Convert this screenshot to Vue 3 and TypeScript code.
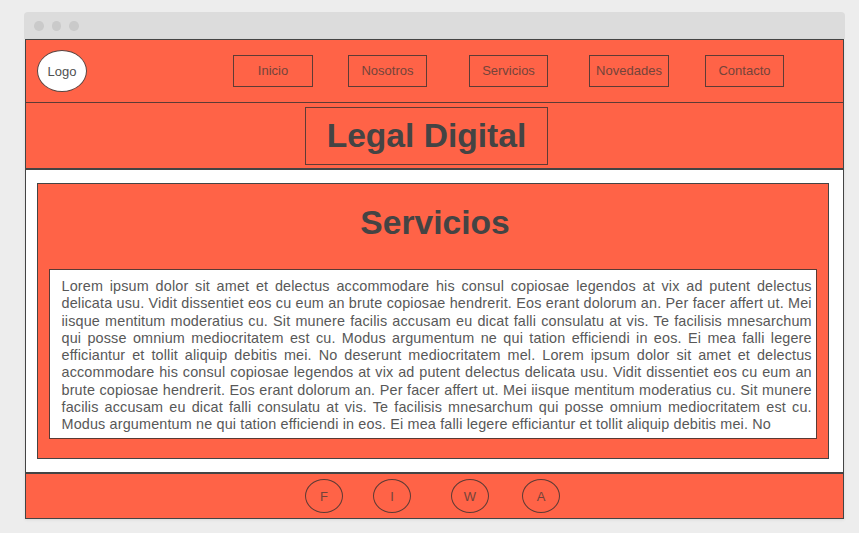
<script setup lang="ts">
interface NavItem {
  label: string
  width: number
  gap: number
}

interface SocialItem {
  label: string
  gap: number
}

const navItems: NavItem[] = [
  { label: 'Inicio', width: 80, gap: 0 },
  { label: 'Nosotros', width: 79, gap: 35 },
  { label: 'Servicios', width: 79, gap: 42 },
  { label: 'Novedades', width: 80, gap: 41 },
  { label: 'Contacto', width: 79, gap: 36 },
]

const lines: string[] = [
  'Lorem ipsum dolor sit amet et delectus accommodare his consul copiosae legendos at vix ad putent delectus',
  'delicata usu. Vidit dissentiet eos cu eum an brute copiosae hendrerit. Eos erant dolorum an. Per facer affert ut. Mei',
  'iisque mentitum moderatius cu. Sit munere facilis accusam eu dicat falli consulatu at vis. Te facilisis mnesarchum',
  'qui posse omnium mediocritatem est cu. Modus argumentum ne qui tation efficiendi in eos. Ei mea falli legere',
  'efficiantur et tollit aliquip debitis mei. No deserunt mediocritatem mel. Lorem ipsum dolor sit amet et delectus',
  'accommodare his consul copiosae legendos at vix ad putent delectus delicata usu. Vidit dissentiet eos cu eum an',
  'brute copiosae hendrerit. Eos erant dolorum an. Per facer affert ut. Mei iisque mentitum moderatius cu. Sit munere',
  'facilis accusam eu dicat falli consulatu at vis. Te facilisis mnesarchum qui posse omnium mediocritatem est cu.',
  'Modus argumentum ne qui tation efficiendi in eos. Ei mea falli legere efficiantur et tollit aliquip debitis mei. No',
]

const socials: SocialItem[] = [
  { label: 'F', gap: 0 },
  { label: 'I', gap: 30 },
  { label: 'W', gap: 40 },
  { label: 'A', gap: 33 },
]
</script>

<template>
  <div class="page">
    <div class="chrome">
      <span v-for="n in 3" :key="n" class="dot"></span>
    </div>
    <div class="window">
      <header class="topbar">
        <div class="logo">Logo</div>
        <nav class="nav">
          <a
            v-for="item in navItems"
            :key="item.label"
            class="nav-item"
            :style="{ width: item.width + 'px', marginLeft: item.gap + 'px' }"
            >{{ item.label }}</a
          >
        </nav>
      </header>
      <section class="banner">
        <h1 class="title">Legal Digital</h1>
      </section>
      <main class="content">
        <article class="card">
          <h2 class="heading">Servicios</h2>
          <div class="text">
            <p v-for="(line, i) in lines" :key="i" class="line">{{ line }}</p>
          </div>
        </article>
      </main>
      <footer class="footer">
        <a
          v-for="s in socials"
          :key="s.label"
          class="social"
          :style="{ marginLeft: s.gap + 'px' }"
          >{{ s.label }}</a
        >
      </footer>
    </div>
  </div>
</template>

<style>
body {
  background: #ededed;
}
</style>

<style scoped>
.page {
  box-sizing: border-box;
  height: 533px;
  padding: 12px 14px 14px 24px;
  background: #ededed;
  font-family: 'Liberation Sans', Arial, sans-serif;
  font-size: 13px;
  color: #444;
  overflow: hidden;
}
.page * {
  box-sizing: border-box;
}
.chrome {
  display: flex;
  gap: 8px;
  height: 27px;
  padding: 9px 10px;
  border-radius: 4px 4px 0 0;
  background: #dcdcdc;
}
.dot {
  width: 9.5px;
  height: 9.5px;
  border-radius: 50%;
  background: #cacaca;
}
.window {
  display: flex;
  flex-direction: column;
  width: 819px;
  height: 480px;
  margin-left: 1px;
  border: 1px solid #444;
  background: #fff;
  box-shadow: 0 1px 3px rgba(0, 0, 0, 0.08);
}
.topbar {
  display: flex;
  height: 63px;
  padding: 10px 11px;
  border-bottom: 1px solid #5f3b35;
  background: #ff6347;
}
.logo {
  display: flex;
  align-items: center;
  justify-content: center;
  width: 50px;
  height: 42px;
  border: 1px solid #5a4440;
  border-radius: 50%;
  background: #fff;
  color: #505050;
}
.nav {
  display: flex;
  margin: 5px 0 0 146px;
}
.nav-item {
  height: 32px;
  border: 1px solid #5f3b35;
  line-height: 30px;
  text-align: center;
  color: #74433a;
}
.banner {
  height: 67px;
  padding: 4px 0 0 279px;
  border-bottom: 2px solid #444;
  background: #ff6347;
}
.title {
  width: 243px;
  height: 58px;
  margin: 0;
  border: 1px solid #5f3b35;
  font-size: 33.6px;
  line-height: 56px;
  text-align: center;
}
.content {
  height: 302px;
  padding: 13px 14px 13px 11px;
}
.card {
  height: 276px;
  padding: 0 11px;
  border: 1px solid #444;
  background: #ff6347;
}
.heading {
  height: 85px;
  margin: 0;
  padding-left: 4px;
  font-size: 33.6px;
  line-height: 77px;
  text-align: center;
}
.text {
  height: 170px;
  padding: 8px 4.3px 0 11.5px;
  border: 1px solid #5a3a34;
  background: #fff;
  color: #585858;
}
.line {
  height: 17.3px;
  margin: 0;
  font-size: 14.4px;
  letter-spacing: 0.15px;
  line-height: 17.3px;
  text-align: justify;
  text-align-last: justify;
  white-space: nowrap;
}
.line:last-child {
  text-align-last: left;
}
.footer {
  display: flex;
  flex: 1;
  padding: 5px 0 0 279px;
  border-top: 2px solid #444;
  background: #ff6347;
}
.social {
  width: 38px;
  height: 34px;
  border: 1px solid #5f3b35;
  border-radius: 50%;
  line-height: 34px;
  text-align: center;
  color: #74433a;
}
</style>
